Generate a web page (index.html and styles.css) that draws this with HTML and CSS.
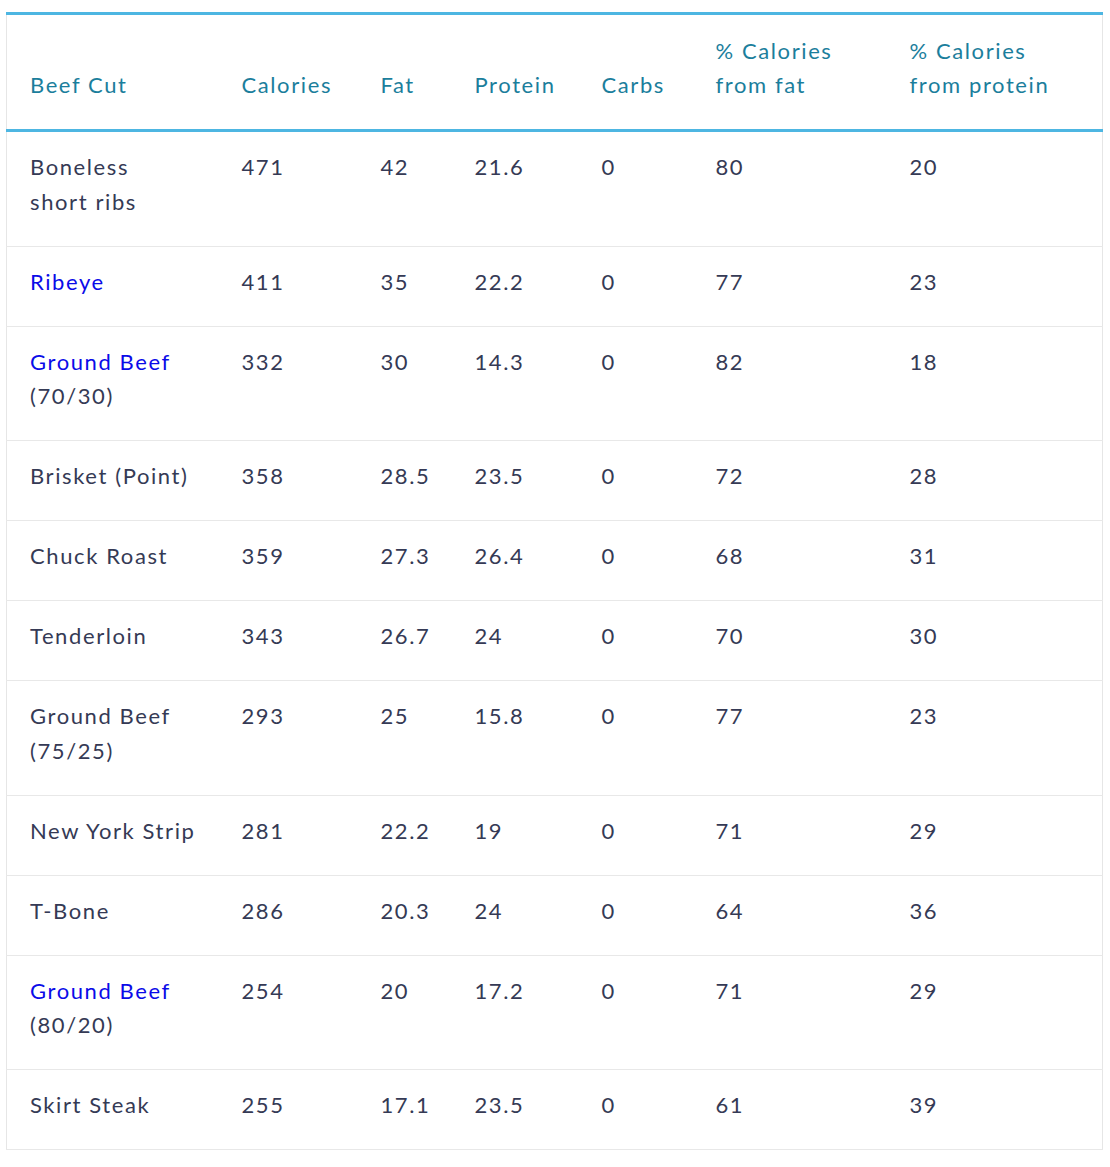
FILE: index.html
```html
<!DOCTYPE html>
<html>
<head>
<meta charset="utf-8">
<link rel="stylesheet" href="styles.css">
</head>
<body>
<table class="beef">
<colgroup>
<col class="c1"><col class="c2"><col class="c3"><col class="c4"><col class="c5"><col class="c6"><col class="c7">
</colgroup>
<thead>
<tr><th>Beef Cut</th><th>Calories</th><th>Fat</th><th>Protein</th><th>Carbs</th><th>% Calories<br>from fat</th><th>% Calories<br>from protein</th></tr>
</thead>
<tbody>
<tr><td>Boneless<br>short ribs</td><td>471</td><td>42</td><td>21.6</td><td>0</td><td>80</td><td>20</td></tr>
<tr><td><a href="#">Ribeye</a></td><td>411</td><td>35</td><td>22.2</td><td>0</td><td>77</td><td>23</td></tr>
<tr><td><a href="#">Ground Beef</a><br>(70/30)</td><td>332</td><td>30</td><td>14.3</td><td>0</td><td>82</td><td>18</td></tr>
<tr><td>Brisket (Point)</td><td>358</td><td>28.5</td><td>23.5</td><td>0</td><td>72</td><td>28</td></tr>
<tr><td>Chuck Roast</td><td>359</td><td>27.3</td><td>26.4</td><td>0</td><td>68</td><td>31</td></tr>
<tr><td>Tenderloin</td><td>343</td><td>26.7</td><td>24</td><td>0</td><td>70</td><td>30</td></tr>
<tr><td>Ground Beef<br>(75/25)</td><td>293</td><td>25</td><td>15.8</td><td>0</td><td>77</td><td>23</td></tr>
<tr><td>New York Strip</td><td>281</td><td>22.2</td><td>19</td><td>0</td><td>71</td><td>29</td></tr>
<tr><td>T-Bone</td><td>286</td><td>20.3</td><td>24</td><td>0</td><td>64</td><td>36</td></tr>
<tr><td><a href="#">Ground Beef</a><br>(80/20)</td><td>254</td><td>20</td><td>17.2</td><td>0</td><td>71</td><td>29</td></tr>
<tr><td>Skirt Steak</td><td>255</td><td>17.1</td><td>23.5</td><td>0</td><td>61</td><td>39</td></tr>
</tbody>
</table>
</body>
</html>
```
FILE: styles.css
```css
html, body {
  margin: 0;
  padding: 0;
  background: #ffffff;
}
body {
  padding: 12px 8px 0 6px;
  font-family: Lato, "Noto Sans", sans-serif;
}
.beef {
  border-collapse: collapse;
  table-layout: fixed;
  width: 1096px;
  border-top: 3px solid #4db6e2;
  border-left: 1px solid #e6e6e6;
  border-right: 1px solid #e6e6e6;
  border-bottom: 1px solid #e6e6e6;
}
.c1 { width: 212px; }
.c2 { width: 139px; }
.c3 { width: 94px; }
.c4 { width: 127px; }
.c5 { width: 114px; }
.c6 { width: 194px; }
.c7 { width: 216px; }
.beef th {
  text-align: left;
  vertical-align: bottom;
  font-weight: 400;
  font-size: 22px;
  line-height: 34px;
  color: #1b7e9c;
  padding: 19px 4px 27px 23px;
  border-bottom: 3px solid #4db6e2;
  letter-spacing: 1.6px;
  white-space: nowrap;
}
.beef td {
  text-align: left;
  vertical-align: top;
  font-size: 22px;
  line-height: 34.5px;
  color: #353a55;
  padding: 18px 4px 26.5px 23px;
  border-bottom: 1px solid #e8e8e8;
  letter-spacing: 1.6px;
  white-space: nowrap;
}
.beef td a {
  color: #0b0be8;
  text-decoration: none;
}
```
